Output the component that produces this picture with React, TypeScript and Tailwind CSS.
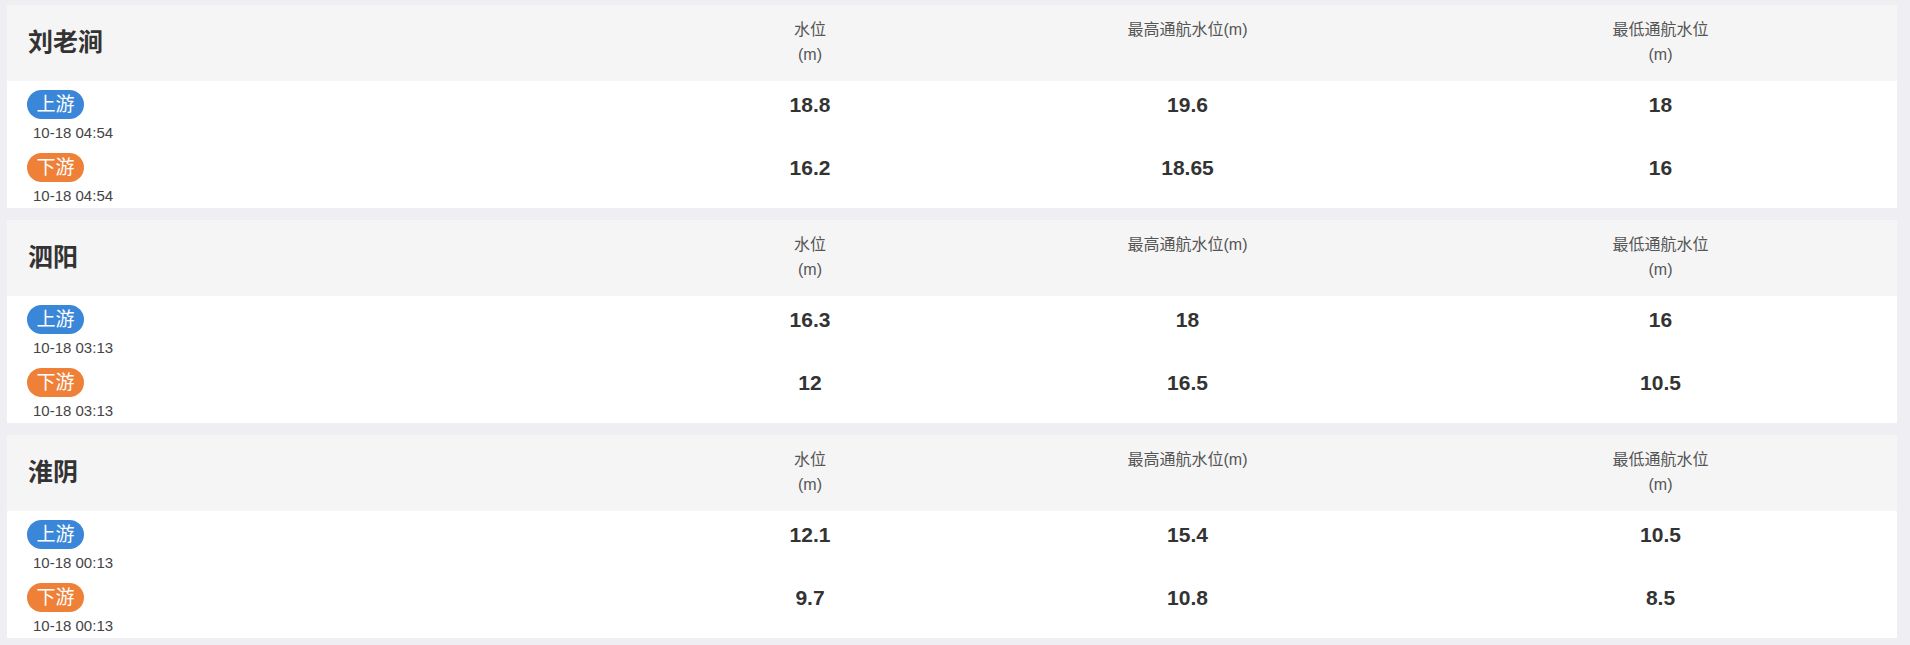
import React from "react";

type Row = { label: "上游" | "下游"; time: string; level: string; high: string; low: string };
type Station = { name: string; rows: Row[] };

const data: Station[] = [
  {
    name: "刘老涧",
    rows: [
      { label: "上游", time: "10-18 04:54", level: "18.8", high: "19.6", low: "18" },
      { label: "下游", time: "10-18 04:54", level: "16.2", high: "18.65", low: "16" },
    ],
  },
  {
    name: "泗阳",
    rows: [
      { label: "上游", time: "10-18 03:13", level: "16.3", high: "18", low: "16" },
      { label: "下游", time: "10-18 03:13", level: "12", high: "16.5", low: "10.5" },
    ],
  },
  {
    name: "淮阴",
    rows: [
      { label: "上游", time: "10-18 00:13", level: "12.1", high: "15.4", low: "10.5" },
      { label: "下游", time: "10-18 00:13", level: "9.7", high: "10.8", low: "8.5" },
    ],
  },
];

const font = { fontFamily: '"Liberation Sans", "Noto Sans CJK SC", Arial, sans-serif' };

function Card({ s }: { s: Station }) {
  return (
    <div className="w-full bg-white">
      <div className="grid grid-cols-[662px_282px_473px_473px] h-[76px] bg-[#f5f5f6]">
        <div className="flex items-center pl-[21px] text-[25px] font-bold text-[#333]">{s.name}</div>
        <div className="pt-[12px] text-center text-[16px] leading-[25px] text-[#555]">
          水位
          <br />
          (m)
        </div>
        <div className="pt-[12px] text-center text-[16px] leading-[25px] text-[#555]">最高通航水位(m)</div>
        <div className="pt-[12px] text-center text-[16px] leading-[25px] text-[#555]">
          最低通航水位
          <br />
          (m)
        </div>
      </div>
      <div className="flex flex-col gap-[8px] pt-[9px] h-[127px] overflow-hidden">
        {s.rows.map((r, i) => (
          <div key={i} className="grid grid-cols-[662px_282px_473px_473px] h-[55px]">
            <div className="pl-[20px] flex flex-col items-start">
              <span
                className={
                  "w-[57px] h-[29px] rounded-full flex items-center justify-center text-white text-[19px] leading-none " +
                  (r.label === "上游" ? "bg-[#3a86d8]" : "bg-[#ef8038]")
                }
              >
                {r.label}
              </span>
              <span className="mt-[2px] ml-[6px] text-[15px] leading-[24px] text-[#444]">{r.time}</span>
            </div>
            <div className="h-[29px] flex items-center justify-center text-[21px] font-bold text-[#333]">{r.level}</div>
            <div className="h-[29px] flex items-center justify-center text-[21px] font-bold text-[#333]">{r.high}</div>
            <div className="h-[29px] flex items-center justify-center text-[21px] font-bold text-[#333]">{r.low}</div>
          </div>
        ))}
      </div>
    </div>
  );
}

export default function App() {
  return (
    <div className="min-h-[645px] bg-[#eeeef3] pt-[5px] pl-[7px] pr-[13px] flex flex-col gap-[12px]" style={font}>
      {data.map((s) => (
        <Card key={s.name} s={s} />
      ))}
    </div>
  );
}
